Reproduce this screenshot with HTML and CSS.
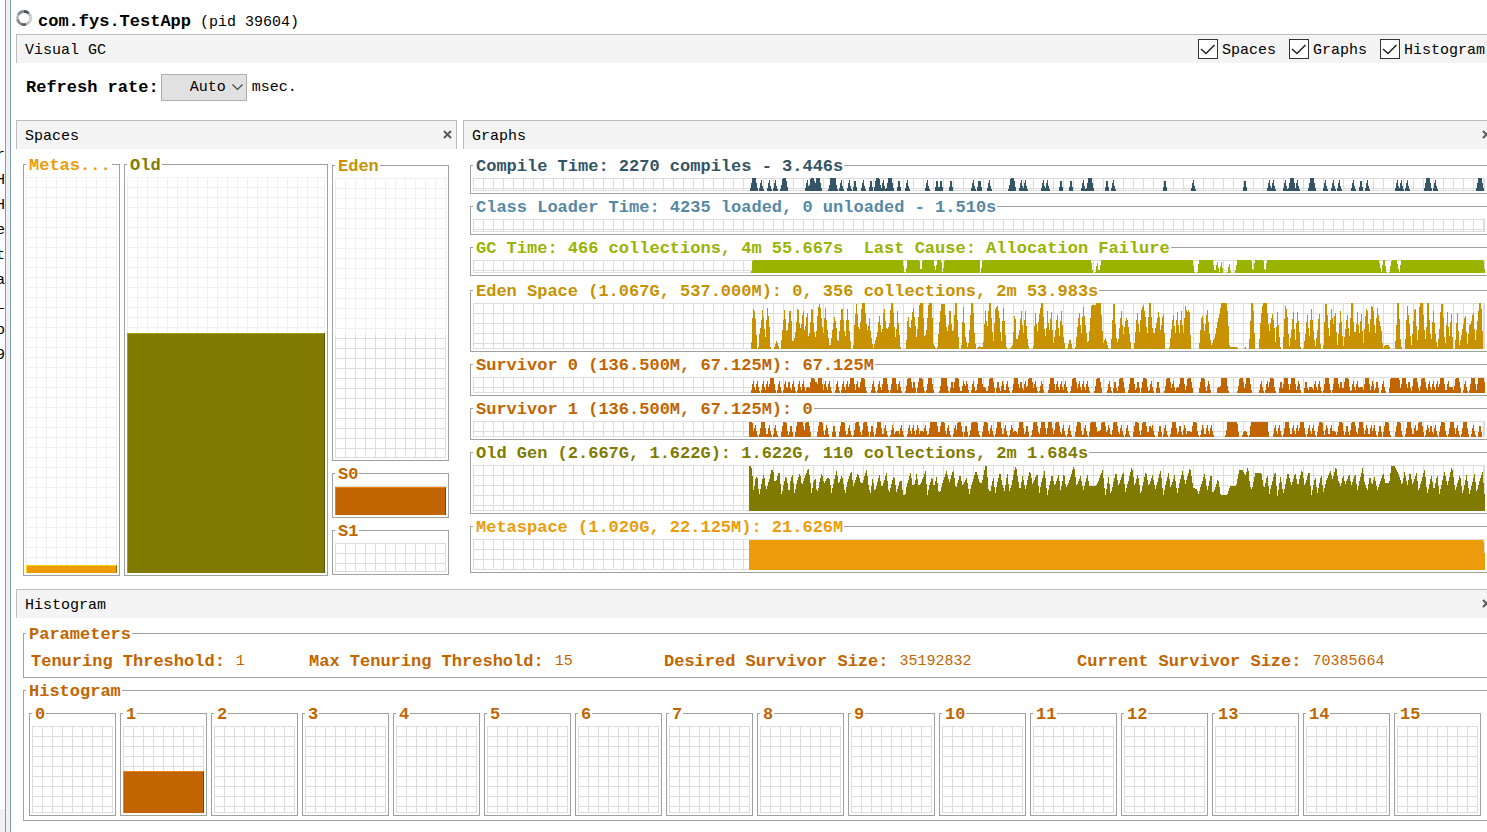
FILE: index.html
```html
<!DOCTYPE html>
<html lang="en">
<head>
<meta charset="utf-8">
<title>com.fys.TestApp (pid 39604) - Visual GC</title>
<link rel="stylesheet" href="styles.css">
</head>
<body>
<div class="shell">
  <div class="side">
    <div class="side-list"><span>r</span><span>H</span><span>H</span><span>e</span><span>t</span><span>a</span><span>L</span><span>o</span><span>9</span></div>
    <div class="side-foot"></div>
  </div>
  <div class="splitter"></div>
  <main class="main">
    <header class="app-title">
      <svg class="spinner" width="16" height="16" viewBox="0 0 16 16" fill="none" stroke-width="2.600">
        <circle cx="8" cy="8" r="6.600" stroke="#b9b9bd"/>
        <path d="M2.300 4.700A6.600 6.600 0 0 1 8 1.400" stroke="#8d8d94"/>
        <path d="M8 1.400A6.600 6.600 0 0 1 12.500 3.200" stroke="#4c4e5c"/>
        <path d="M1.600 9.500A6.600 6.600 0 0 0 5.500 14.100" stroke="#85858c"/>
        <path d="M5.500 14.100A6.600 6.600 0 0 0 10 14.300" stroke="#5c5d6b"/>
        <path d="M14.300 6A6.600 6.600 0 0 1 13 12.300" stroke="#d4d4d6"/>
      </svg>
      <h1><b>com.fys.TestApp</b> (pid 39604)</h1>
    </header>
    <div class="bar">
      <h2>Visual GC</h2>
      <div class="checks">
        <label><input type="checkbox" checked><span>Spaces</span></label>
        <label><input type="checkbox" checked><span>Graphs</span></label>
        <label><input type="checkbox" checked><span>Histogram</span></label>
      </div>
    </div>
    <div class="toolbar">
      <label for="rate">Refresh rate:</label>
      <select id="rate"><option>Auto</option></select>
      <span>msec.</span>
    </div>
    <div class="panels">
      <section>
        <div class="bar bar-closed">
          <h2>Spaces</h2>
          <button class="close" aria-label="Close Spaces"><svg width="9" height="9" viewBox="0 0 9 9"><path d="M1 1L8 8M8 1L1 8" stroke="#5a5a5a" stroke-width="2"/></svg></button>
        </div>
        <div class="spaces">
          <fieldset class="box c-meta"><legend>Metas...</legend><div class="cells cells-light"><div class="fill" style="height:2%"></div></div></fieldset>
          <fieldset class="box c-old"><legend>Old</legend><div class="cells cells-light"><div class="fill" style="height:60.8%"></div></div></fieldset>
          <div class="young">
            <fieldset class="box c-eden grow"><legend>Eden</legend><div class="cells cells-light"><div class="cells committed"></div></div></fieldset>
            <fieldset class="box c-surv"><legend>S0</legend><div class="cells h-small"><div class="fill" style="height:100%"></div></div></fieldset>
            <fieldset class="box c-surv"><legend>S1</legend><div class="cells h-small"></div></fieldset>
          </div>
        </div>
      </section>
      <section>
        <div class="bar">
          <h2>Graphs</h2>
          <button class="close close-edge" aria-label="Close Graphs"><svg width="9" height="9" viewBox="0 0 9 9"><path d="M1 1L8 8M8 1L1 8" stroke="#5a5a5a" stroke-width="2"/></svg></button>
        </div>
        <div class="graphs">
          <fieldset class="box open c-compile"><legend>Compile Time: 2270 compiles - 3.446s</legend><div class="cells h-thin" data-series="compile"></div></fieldset>
          <fieldset class="box open c-loader"><legend>Class Loader Time: 4235 loaded, 0 unloaded - 1.510s</legend><div class="cells h-thin"></div></fieldset>
          <fieldset class="box open c-gc"><legend>GC Time: 466 collections, 4m 55.667s&nbsp; Last Cause: Allocation Failure</legend><div class="cells h-thin" data-series="gc"></div></fieldset>
          <fieldset class="box open c-eden first-space"><legend>Eden Space (1.067G, 537.000M): 0, 356 collections, 2m 53.983s</legend><div class="cells h-tall" data-series="eden"></div></fieldset>
          <fieldset class="box open c-surv"><legend>Survivor 0 (136.500M, 67.125M): 67.125M</legend><div class="cells h-surv" data-series="s0"></div></fieldset>
          <fieldset class="box open c-surv"><legend>Survivor 1 (136.500M, 67.125M): 0</legend><div class="cells h-surv" data-series="s1"></div></fieldset>
          <fieldset class="box open c-old"><legend>Old Gen (2.667G, 1.622G): 1.622G, 110 collections, 2m 1.684s</legend><div class="cells h-tall" data-series="old"></div></fieldset>
          <fieldset class="box open c-meta"><legend>Metaspace (1.020G, 22.125M): 21.626M</legend><div class="cells h-meta" data-series="meta"></div></fieldset>
        </div>
      </section>
    </div>
    <section>
      <div class="bar">
        <h2>Histogram</h2>
        <button class="close close-edge" aria-label="Close Histogram"><svg width="9" height="9" viewBox="0 0 9 9"><path d="M1 1L8 8M8 1L1 8" stroke="#5a5a5a" stroke-width="2"/></svg></button>
      </div>
      <div class="histogram c-surv">
        <fieldset class="box open params">
          <legend>Parameters</legend>
          <dl>
            <div><dt>Tenuring Threshold:</dt><dd>1</dd></div>
            <div><dt>Max Tenuring Threshold:</dt><dd>15</dd></div>
            <div><dt>Desired Survivor Size:</dt><dd>35192832</dd></div>
            <div><dt>Current Survivor Size:</dt><dd>70385664</dd></div>
          </dl>
        </fieldset>
        <fieldset class="box open ages">
          <legend>Histogram</legend>
          <div class="age-row" id="ages"></div>
        </fieldset>
      </div>
    </section>
  </main>
</div>
<script src="graphs.js"></script>
</body>
</html>
```
FILE: styles.css
```css
* { box-sizing: border-box; }
body {
  margin: 0;
  background: #fff;
  color: #000;
  font: 15px/20px "Liberation Mono", monospace;
  overflow-x: hidden;
}
h1, h2, dl, dd { margin: 0; font: inherit; }
h1 b, .toolbar label, legend, dt { font-size: 17px; font-weight: bold; }
h2 { padding-top: 3px; }

.shell { display: flex; min-height: 100vh; }
.side {
  width: 5px;
  flex: none;
  display: flex;
  flex-direction: column;
  justify-content: space-between;
  overflow: hidden;
}
.side-list { padding-top: 143px; }
.side-list span { display: block; width: 9px; margin-left: -4px; line-height: 25px; }
.side-foot { height: 23px; background: #f0f0f0; }
.splitter {
  width: 6px;
  flex: none;
  background: #f0f0f0;
  border: solid #7f9db9;
  border-width: 0 1px;
}
.main { flex: 1; min-width: 0; padding-left: 5px; }

.app-title { display: flex; height: 34px; padding-top: 10px; gap: 6px; }
.app-title h1 { padding-top: 2px; }
.spinner { flex: none; }

.bar {
  display: flex;
  align-items: center;
  justify-content: space-between;
  height: 29px;
  padding-left: 8px;
  background: #f4f4f4;
  border: solid #bdbdbd;
  border-width: 1px 0 0 1px;
  overflow: hidden;
}
.bar-closed { border-right-width: 1px; }
.close { display: flex; padding: 0; margin: 0 4px 1px 0; border: 0; background: none; }
.close-edge { margin-right: -4px; }

.checks { display: flex; gap: 13px; padding-right: 2px; }
.checks label { display: flex; align-items: center; gap: 4px; }
.checks span { padding-top: 4px; }
.checks input {
  appearance: none;
  width: 20px;
  height: 20px;
  margin: 0;
  border: 1px solid #333;
  background: #fff url("data:image/svg+xml,%3Csvg xmlns='http://www.w3.org/2000/svg' viewBox='0 0 18 18'%3E%3Cpath d='M2 9l5 4.500 8.500-8.500' fill='none' stroke='%23222' stroke-width='1.500'/%3E%3C/svg%3E");
}

.toolbar { display: flex; align-items: center; height: 57px; padding: 0 10px 9px; gap: 5px; }
.toolbar label { margin-right: -3px; }
.toolbar label, .toolbar span { padding-top: 2px; }
.toolbar select {
  appearance: none;
  width: 86px;
  height: 27px;
  padding: 2px 0 0 28px;
  border: 1px solid #adadad;
  border-radius: 0;
  color: #000;
  font: inherit;
  background: #e1e1e1 url("data:image/svg+xml,%3Csvg xmlns='http://www.w3.org/2000/svg' viewBox='0 0 11 7'%3E%3Cpath d='M.5.500l5 5 5-5' fill='none' stroke='%23444' stroke-width='1.200'/%3E%3C/svg%3E") right 3px center / 11px 7px no-repeat;
}

.panels { display: grid; grid-template-columns: 441fr 1024fr; gap: 6px; }
.panels > section { display: flex; flex-direction: column; min-width: 0; }

/* Titled frame around every chart */
.box {
  display: flex;
  flex-direction: column;
  min-width: 0;
  margin: 0;
  padding: 3px 2px 2px;
  border: 1px solid #a0a0a0;
}
.open { border-right: 0; }
legend { height: 19px; padding: 0 1px 0 3px; line-height: 22px; white-space: nowrap; color: var(--c); }

.cells {
  --line: #dcdcdc;
  position: relative;
  flex: 1 0 auto;
  border: solid var(--line);
  border-width: 0 1px 1px 0;
  background:
    linear-gradient(var(--line) 1px, transparent 1px) 0 0 / 10px 10px,
    linear-gradient(90deg, var(--line) 1px, transparent 1px) 0 0 / 10px 10px;
}
.cells-light { --line: #f0f0f0; }
.committed { --line: #dcdcdc; position: absolute; inset: 0 -1px -1px 0; clip-path: inset(56% 0 0 0); }
.fill {
  position: absolute;
  left: 0;
  right: -1px;
  bottom: -1px;
  background: var(--c);
  border: solid var(--hi);
  border-width: 1px 1px 0 1px;
  border-right-color: var(--lo);
}
.cells svg { position: absolute; right: -1px; bottom: -1px; fill: var(--c); shape-rendering: crispEdges; }
.h-thin { height: 13px; flex: none; }
.h-surv { height: 16px; flex: none; }
.h-small { height: 29px; flex: none; }
.h-meta { height: 31px; flex: none; }
.h-tall { height: 46px; flex: none; }

.c-compile { --c: #335566; }
.c-loader { --c: #5588a5; }
.c-gc { --c: #99b300; }
.c-eden { --c: #c89100; }
.c-surv { --c: #c26500; --hi: #f08010; --lo: #804000; }
.c-old { --c: #807a00; --hi: #a8a000; --lo: #555000; }
.c-meta { --c: #ec9c0a; --hi: #ffd000; --lo: #a06a00; }

.spaces {
  flex: 1;
  display: grid;
  grid-template-columns: 97fr 204fr 117fr;
  gap: 4px;
  padding: 6px 8px 13px 7px;
}
.young { display: flex; flex-direction: column; gap: 3px; padding: 1px 0; }
.grow { flex: 1; }
.graphs { display: flex; flex-direction: column; gap: 3px; padding: 7px 0 16px 7px; }
.first-space { margin-top: 2px; }

.histogram { display: flex; flex-direction: column; gap: 3px; padding: 6px 0 11px 7px; }
.params { padding: 9px 0 5px 2px; }
.params dl {
  display: grid;
  grid-template-columns: 278fr 355fr 413fr 410fr;
  padding-left: 5px;
  color: var(--c);
}
.params dl div { display: flex; gap: 11px; white-space: nowrap; }
.ages { padding: 4px 6px 4px 2px; }
.age-row {
  display: grid;
  grid-template-columns: repeat(16, minmax(0, 1fr));
  gap: 4px;
  padding-left: 3px;
}
.age-row .cells { height: 87px; flex: none; }
```
FILE: graphs.js
```js
// Samples are stored in thirds of a pixel, in three runs that start at these offsets.
const RUNS = [-27, 693, 1443];
const WIDTH = 2208;

// Outline series: "x,height" pairs
const outlines = {
  gc: [
    "34,0 38,39 488,39 494,0 498,0 502,39 538,39 543,0 548,39 581,39 586,5 592,39 604,39 608,0 614,39 718,39 719,39",
    "0,0 2,0 8,39 333,39 339,0 346,0 352,35 357,0 364,39 638,39 644,0 652,0 657,39 698,39 705,0 712,35 718,0 724,35 730,0 742,0 748,30",
    "0,15 3,0 15,0 22,39 64,39 69,0 75,39 100,39 105,0 111,39 447,39 454,0 460,39 464,39 470,0 478,0 485,39 500,39 508,0 514,39 760,39 765,0"
  ],
  eden: [
    "34,0 36,80 42,132 44,110 48,80 50,30 52,0 55,0 58,40 64,80 67,120 72,80 76,25 79,80 82,128 88,80 90,30 92,0 102,0 110,27 118,0 122,0 127,50 134,120 140,50 144,60 150,130 155,80 158,15 163,30 168,60 174,138 180,60 184,70 190,125 194,50 198,80 202,120 206,30 210,60 216,138 222,60 228,30 234,120 240,138 246,80 250,40 256,128 262,60 270,0 272,15 278,60 284,100 290,60 294,10 300,70 306,138 312,70 316,30 322,125 328,60 334,0 340,0 344,80 350,138 356,60 360,60 366,138 374,138 380,70 384,50 388,99 392,50 400,0 402,10 412,45 418,105 424,50 428,60 432,138 438,65 442,60 448,70 453,138 459,138 462,80 468,20 472,122 478,50 482,0 498,0 504,110 510,50 516,100 520,128 526,75 530,30 536,100 539,138 548,138 554,30 560,60 566,138 576,138 580,15 588,0 592,0 600,100 604,135 614,135 620,60 624,50 630,135 636,55 640,50 646,138 650,138 654,60 658,0 664,0 670,135 676,40 684,0 688,50 694,138 699,138 704,40 708,0 716,5 719,8",
    "0,8 8,5 10,10 16,120 22,60 27,138 32,138 34,100 40,15 46,120 52,132 58,100 64,15 70,130 76,50 80,0 90,0 98,12 105,120 110,20 118,50 124,120 130,40 136,120 142,35 147,0 160,0 166,115 172,50 178,100 184,138 188,138 192,70 198,30 202,120 208,50 214,120 220,15 226,50 232,110 238,30 244,120 250,40 256,0 262,0 270,33 278,0 286,0 292,60 298,115 304,40 310,132 318,60 324,10 330,70 334,130 346,132 350,138 362,138 366,80 370,15 376,35 386,0 393,0 400,135 404,135 408,40 414,15 424,120 430,40 434,70 438,92 442,92 448,50 454,0 462,0 472,115 478,45 484,115 490,135 496,100 502,40 508,138 512,138 516,70 522,40 530,80 537,118 542,50 550,115 556,0 568,0 574,55 580,110 586,40 592,118 598,40 604,120 610,40 616,130 622,110 628,122 633,10 634,0 657,0 666,112 674,50 682,125 688,50 694,10 698,20 706,40 712,80 718,100 724,138 740,138 744,100 748,20 749,6",
    "0,6 22,6 24,0 40,0 46,6 50,0 56,0 60,50 64,138 68,138 72,100 75,0 87,0 90,60 96,125 100,138 110,138 114,90 118,50 122,80 128,108 134,60 137,15 142,118 148,40 152,0 159,0 162,70 167,135 172,105 178,5 184,50 190,120 196,20 202,117 208,60 212,0 220,0 226,40 232,110 238,30 244,125 250,60 256,5 262,50 268,120 272,0 280,0 286,135 290,135 298,30 304,125 310,70 316,118 322,5 332,118 340,5 352,108 358,30 364,138 368,138 372,50 378,50 382,118 388,40 394,115 400,10 408,120 412,120 418,45 425,135 430,120 436,40 442,128 448,85 454,60 459,0 462,8 468,12 476,12 482,0 495,0 500,80 502,138 506,138 508,100 512,20 516,0 525,0 532,135 540,60 544,5 548,50 553,118 557,120 562,20 566,60 569,138 578,138 584,50 588,20 592,138 596,138 600,60 604,20 610,122 616,50 622,0 628,50 633,135 639,135 642,50 646,10 652,118 658,30 664,118 669,0 675,0 682,118 688,10 696,50 706,108 712,10 718,70 724,80 730,118 736,20 742,80 748,138 752,138 756,110 759,0"
  ],
  old: [
    "27,0 27,135 34,135 38,100 41,58 47,100 52,105 56,60 59,50 64,80 72,115 76,75 80,65 88,95 94,122 100,122 104,85 110,95 118,122 122,75 125,45 130,75 138,108 144,75 147,50 152,95 158,110 164,50 170,85 180,115 186,75 192,95 205,130 210,100 215,50 220,85 226,100 230,60 234,60 240,95 246,115 252,80 262,100 270,95 274,50 280,80 290,122 296,80 306,108 316,50 322,85 334,120 340,75 344,85 354,115 362,85 368,85 380,125 386,75 391,50 398,100 404,60 410,75 418,110 424,75 428,75 440,115 447,50 454,80 462,108 470,55 478,85 484,95 489,48 496,48 500,75 512,115 518,75 524,80 530,112 536,75 544,85 557,120 562,45 568,75 576,105 582,70 590,105 596,55 602,60 608,85 620,120 628,85 640,125 648,65 660,112 668,75 680,100 688,50 694,75 708,122 719,85",
    "0,85 6,85 16,135 20,135 26,60 32,60 40,105 46,50 52,85 60,118 68,75 74,60 82,115 88,60 94,75 104,125 108,135 114,95 120,60 128,108 136,65 150,122 158,80 172,115 178,50 184,85 194,122 202,45 208,75 216,112 224,75 236,110 242,60 252,115 258,70 268,90 282,137 290,75 302,105 310,60 322,110 328,75 346,75 354,85 368,125 376,45 386,105 392,50 398,75 408,118 416,75 430,118 436,55 444,85 456,135 464,75 474,112 482,50 490,85 498,120 506,75 518,108 526,65 542,122 550,45 558,85 566,115 572,70 584,108 592,50 600,90 608,122 616,80 630,132 640,70 650,65 656,50 664,80 674,112 682,60 694,115 698,50 708,75 714,100 722,48 742,48 749,70",
    "0,75 18,75 28,122 38,122 46,105 54,135 60,75 66,65 76,113 94,113 102,65 112,110 118,50 126,85 136,120 142,42 152,105 160,50 174,118 184,75 196,115 204,75 216,128 224,75 238,122 244,45 256,105 262,50 274,110 280,55 290,95 302,120 308,95 318,135 324,95 332,75 340,108 346,80 358,112 364,75 376,112 382,60 398,130 404,85 412,60 420,108 426,75 434,105 442,60 448,80 460,115 466,85 478,85 484,135 494,135 508,105 516,75 524,120 532,75 540,118 548,80 560,115 566,60 584,125 592,50 604,108 612,60 622,110 628,50 644,120 652,75 666,135 676,60 690,110 698,50 710,110 718,50 734,112 740,55 750,95 759,122 762,50 765,50 765,0"
  ],
  meta: ["27,0 27,90", "0,90", "0,90 759,90 763,72 765,0"]
};

// Spike series: centre plus kind (n narrow, s short, t tall, w wide, x extra wide)
const spikes = {
  compile: [
    "42t 64n 88n 106n 133t 202n 217t 234t 279w 304n 328n 345n 370n 393n 413t 430n 450t 477n 502n 562n 591n 603n 633n 700n 717n",
    "0n 28n 97t 124n 136n 190n 202n 243n 273n 310n 330t 381n 400n 555n 640n",
    "45n 118n 130n 166n 186t 202n 246t 286n 310n 328n 370n 393n 412n 502n 514n 532n 594t 616n 750t"
  ],
  s0: [
    "40n 52n 70n 82n 96t 118n 136n 147n 160n 178n 190n 204s 218t 228n 240t 256n 268n 292n 310n 322n 336t 352n 368t 400n 418n 435t 462t 478n 508t 522n 542t 570t 612w 636n 650t 671n 680n 700n",
    "0t 12s 34t 54n 68n 82n 108t 123n 136n 151t 166n 185n 216t 232n 244n 256n 283t 298n 310n 322n 355t 388n 405n 424t 456t 474n 494t 514n 534n 565t 580n 594s 606t 628t 668t 686n 718s 732w",
    "34t 54t 94n 112n 125t 153n 168t 189t 206n 228n 242s 256n 268n 291t 318t 333n 350t 370n 382n 394s 411t 428n 441n 460n 490w 500w 522t 537n 556t 580t 598n 610n 622n 636t 655n 664s 682t 706n 729t 750t 757t"
  ],
  s1: [
    "32t 46n 69t 88n 106n 134t 153n 176t 184t 202t 242t 260n 282n 308t 328n 352t 376t 396n 417t 436n 458n 472s 484n 508n 520n 533n 545s 556n 576t 586t 608t 625n 646n 658t 678n 700t 707t",
    "17t 34n 57t 76n 95n 105s 123t 141n 166t 189t 210t 232t 250n 268n 296t 316n 340w 358s 370t 386n 406t 424n 442n 470t 493t 510n 517n 540n 556n 582t 600n 614n 626s 644t 668n 682n 694n",
    "0w 14w 45s 88x 136n 148n 171t 190n 202n 216t 238n 250n 272t 290n 304n 312s 332t 351n 370t 393t 410n 424n 433n 450n 470t 506t 537t 556n 571t 593n 603n 616n 638t 666t 682n 705t 730n 750n"
  ]
};

// kind: [height share, half base, half top]
const SHAPES = { n: [0.82, 7, 1], s: [0.4, 8, 1], t: [1, 12, 5], w: [1, 14, 8], x: [1, 30, 26] };

function draw(host, height, d) {
  host.innerHTML = `<svg width="${WIDTH / 3}" height="${height / 3}" viewBox="0 0 ${WIDTH} ${height}"><path d="${d}"/></svg>`;
}

document.querySelectorAll("[data-series]").forEach(host => {
  const name = host.dataset.series;
  const height = host.offsetHeight * 3;
  let d = "";
  if (outlines[name]) {
    const points = outlines[name].flatMap((run, i) => run.split(" ").map(pair => {
      const [x, h] = pair.split(",").map(Number);
      return `${x + RUNS[i]} ${height - h}`;
    }));
    d = `M0 ${height}L${points.join("L")}L${WIDTH} ${height}Z`;
  } else {
    spikes[name].forEach((run, i) => run.split(" ").forEach(item => {
      const [share, base, top] = SHAPES[item.slice(-1)];
      const x = parseInt(item, 10) + RUNS[i];
      const full = name === "compile" ? 39 : 45;
      const y = height - full * share;
      d += `M${x - base} ${height}V${height - 3}L${x - base + 3} ${height - full * 0.35}L${x - top} ${y}H${x + top}L${x + base - 3} ${height - full * 0.35}L${x + base} ${height - 3}V${height}Z`;
    }));
  }
  draw(host, height, d);
});

// Survivor ages: share of each age's cell that is filled
const ages = Array(16).fill(0);
ages[1] = 48.3;
document.getElementById("ages").innerHTML = ages.map((share, age) =>
  `<fieldset class="box"><legend>${age}</legend><div class="cells">${share ? `<div class="fill" style="height:${share}%"></div>` : ""}</div></fieldset>`
).join("");
```
